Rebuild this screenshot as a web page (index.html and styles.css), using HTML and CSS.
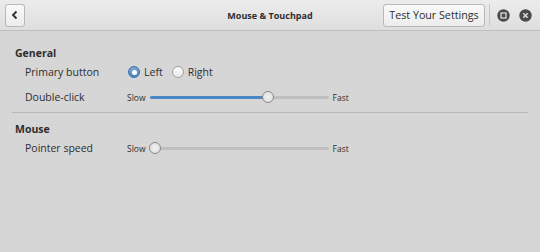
FILE: index.html
```html
<!DOCTYPE html>
<html>
<head>
<meta charset="utf-8">
<link rel="stylesheet" href="styles.css">
</head>
<body>
<div class="window">
  <header class="headerbar">
    <button class="back-btn" aria-label="Back">
      <svg width="10" height="10" viewBox="0 0 10 10"><path d="M6.5 1.5 L3 5 L6.5 8.5" fill="none" stroke="#2e2e2e" stroke-width="1.8"/></svg>
    </button>
    <div class="title">Mouse &amp; Touchpad</div>
    <button class="test-btn">Test Your Settings</button>
    <div class="vsep"></div>
    <div class="wicon">
      <svg width="13" height="13" viewBox="0 0 13 13"><circle cx="6.5" cy="6.5" r="6.2" fill="#4a4a4a"/><rect x="4" y="4" width="5" height="5" fill="none" stroke="#dcdcdc" stroke-width="1.3"/></svg>
    </div>
    <div class="wicon">
      <svg width="13" height="13" viewBox="0 0 13 13"><circle cx="6.5" cy="6.5" r="6.2" fill="#4a4a4a"/><path d="M4.3 4.3 L8.7 8.7 M8.7 4.3 L4.3 8.7" stroke="#dcdcdc" stroke-width="1.5"/></svg>
    </div>
  </header>
  <main class="content">
    <section class="group">
      <h2 class="group-title">General</h2>
      <div class="row">
        <span class="label">Primary button</span>
        <div class="radios">
          <span class="radio checked"><span class="dot"></span></span><span class="rlabel">Left</span>
          <span class="radio"></span><span class="rlabel">Right</span>
        </div>
      </div>
      <div class="row">
        <span class="label">Double-click</span>
        <div class="slider">
          <span class="small">Slow</span>
          <div class="track"><div class="fill" style="width:118px"></div><span class="thumb" style="left:118px"></span></div>
          <span class="small">Fast</span>
        </div>
      </div>
    </section>
    <hr class="sep">
    <section class="group">
      <h2 class="group-title">Mouse</h2>
      <div class="row">
        <span class="label">Pointer speed</span>
        <div class="slider">
          <span class="small">Slow</span>
          <div class="track"><div class="fill" style="width:0px"></div><span class="thumb" style="left:5px"></span></div>
          <span class="small">Fast</span>
        </div>
      </div>
    </section>
  </main>
</div>
</body>
</html>
```
FILE: styles.css
```css
* { box-sizing: border-box; }
html, body { margin: 0; padding: 0; }
body {
  width: 540px;
  height: 252px;
  background: #d6d6d6;
  font-family: "Open Sans", "Noto Sans", sans-serif;
  color: #2e3436;
  overflow: hidden;
}
.window { width: 540px; height: 252px; display: flex; flex-direction: column; }
.headerbar {
  height: 31px;
  display: flex;
  align-items: center;
  padding: 0 8px 0 5px;
  background: linear-gradient(#ececec, #dedede);
  border-bottom: 1px solid #bdbdbd;
  position: relative;
}
.back-btn {
  width: 20px;
  height: 23px;
  padding: 0;
  display: flex;
  align-items: center;
  justify-content: center;
  border: 1px solid #b8b8b8;
  border-radius: 3px;
  background: linear-gradient(#f9f9f9, #ececec);
}
.title {
  position: absolute;
  left: 0; right: 0;
  text-align: center;
  font-weight: bold;
  font-size: 9px;
  color: #2e2e2e;
  pointer-events: none;
}
.test-btn {
  margin-left: auto;
  width: 102px;
  height: 23px;
  padding: 0;
  font-family: "Open Sans", "Noto Sans", sans-serif;
  font-size: 10.7px;
  color: #2e2e2e;
  border: 1px solid #b8b8b8;
  border-radius: 3px;
  background: linear-gradient(#f9f9f9, #ececec);
  position: relative;
}
.vsep { width: 1px; height: 22px; background: #c8c8c8; margin: 0 7px 0 4px; }
.wicon { width: 13px; height: 13px; display: flex; }
.wicon + .wicon { margin-left: 9px; }
.content { padding: 15px 12px 0 12px; }
.group-title { margin: 0 0 0 3px; font-size: 10.5px; font-weight: bold; color: #2e2e2e; height: 14px; line-height: 14px; }
.row { display: flex; align-items: center; height: 24px; padding-left: 13px; }
.row + .row { margin-top: 1px; }
.label { width: 102px; font-size: 10.5px; color: #2e2e2e; }
.radios { display: flex; align-items: center; }
.radio {
  width: 12px; height: 12px;
  border-radius: 50%;
  border: 1px solid #a0a0a0;
  background: linear-gradient(#fdfdfd, #e8e8e8);
  display: flex; align-items: center; justify-content: center;
}
.radio.checked { margin-left: 1px; border-color: #3a6ea5; background: linear-gradient(#7fa7d4, #4a86c5); }
.radio .dot { width: 5px; height: 5px; border-radius: 50%; background: #fff; }
.rlabel { font-size: 10.5px; margin: 0 9px 0 4px; color: #2e2e2e; }
.slider { display: flex; align-items: center; }
.small { font-size: 8.5px; color: #2e2e2e; }
.track {
  position: relative;
  width: 179px;
  height: 3px;
  margin: 0 4px;
  background: #bfbfbf;
  border-radius: 2px;
}
.fill { height: 3px; background: #4a86c5; border-radius: 2px; }
.thumb {
  position: absolute;
  top: -5px;
  width: 12px; height: 12px;
  margin-left: -6px;
  border-radius: 50%;
  border: 1px solid #8a8a8a;
  background: radial-gradient(#f2f2f2, #dadada);
}
.sep { border: 0; border-top: 1px solid #b8b8b8; margin: 3px 0 9px 0; }
```
